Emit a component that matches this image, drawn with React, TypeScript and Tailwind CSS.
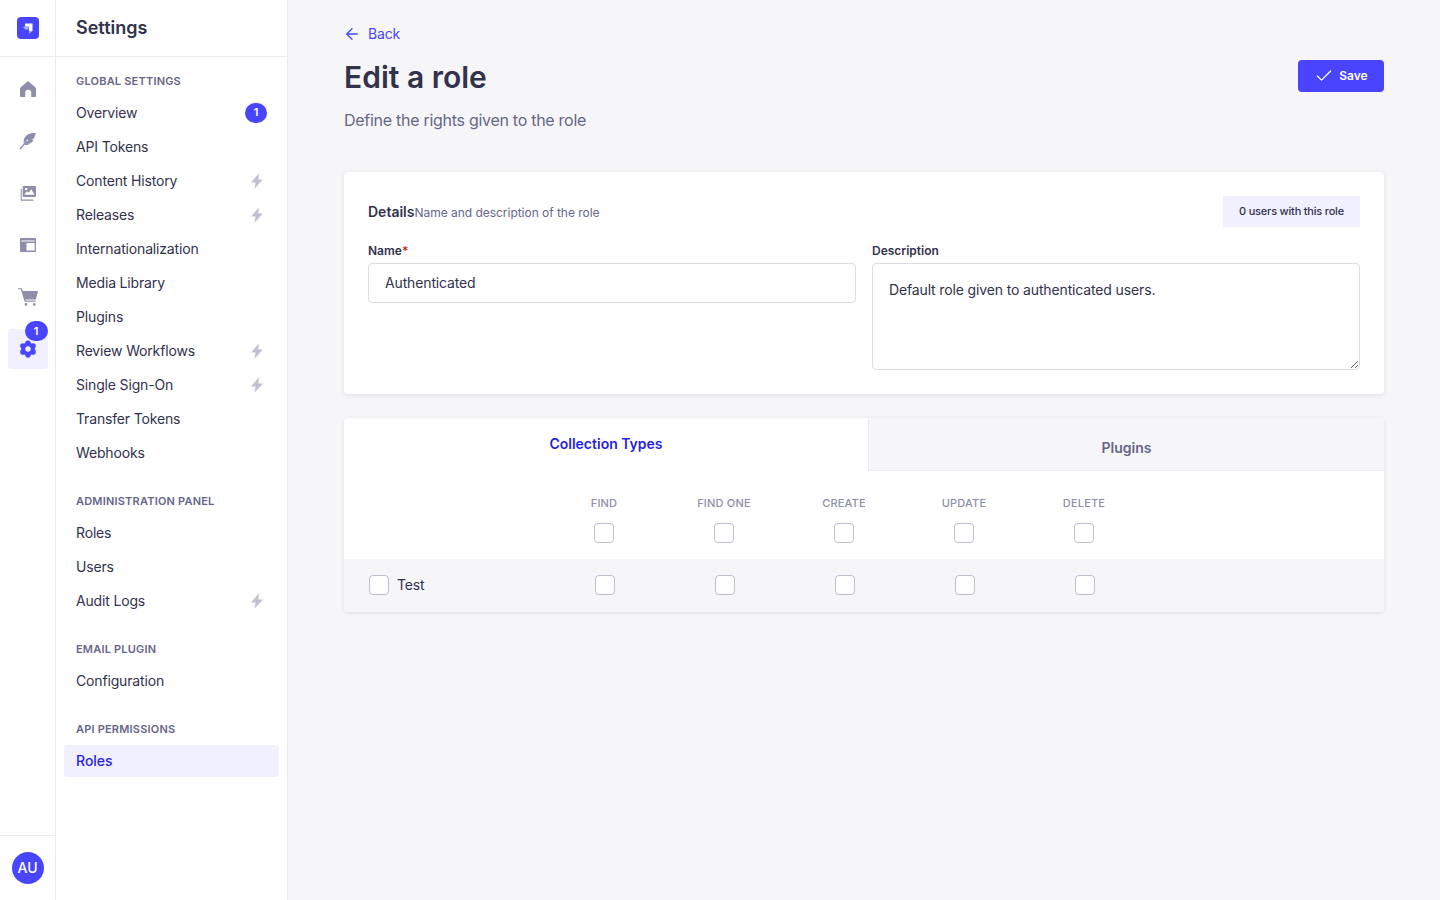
import { ArrowLeft, Check } from 'lucide-react';

const sections = [
  {
    title: 'Global Settings',
    items: [
      { label: 'Overview', badge: true },
      { label: 'API Tokens' },
      { label: 'Content History', bolt: true },
      { label: 'Releases', bolt: true },
      { label: 'Internationalization' },
      { label: 'Media Library' },
      { label: 'Plugins' },
      { label: 'Review Workflows', bolt: true },
      { label: 'Single Sign-On', bolt: true },
      { label: 'Transfer Tokens' },
      { label: 'Webhooks' },
    ],
  },
  {
    title: 'Administration Panel',
    items: [{ label: 'Roles' }, { label: 'Users' }, { label: 'Audit Logs', bolt: true }],
  },
  { title: 'Email Plugin', items: [{ label: 'Configuration' }] },
  { title: 'API Permissions', items: [{ label: 'Roles', active: true }] },
];

const actions = ['Find', 'Find one', 'Create', 'Update', 'Delete'];

function Bolt() {
  return (
    <svg width="12" height="16" viewBox="0 0 12 16" className="mr-1 fill-[#c0c0cf]">
      <path d="M8.200.2 0 9.400h4.600L3.400 15.800 12 6.400H7.200z" />
    </svg>
  );
}

function Logo() {
  return (
    <svg width="22" height="22" viewBox="0 0 22 22">
      <rect width="22" height="22" rx="4" fill="#4945ff" />
      <path d="M8 6.500h7.500V14H12v-3.900a.6.6 0 0 0-.6-.6H8z" fill="#fff" />
      <path d="M8 9.500h3.600V12.600H8.600a.6.6 0 0 1-.4-.2L6 10.200z" fill="#fff" opacity=".55" />
      <path d="M12 14h3.500l-3.100 2.400a.3.3 0 0 1-.4-.2z" fill="#fff" opacity=".55" />
    </svg>
  );
}

function HomeIcon() {
  return (
    <svg width="16" height="16" viewBox="0 0 16 16" className="fill-[#8e8ea9]">
      <path d="M7.200.7a1.200 1.200 0 0 1 1.600 0l6.800 5.900c.3.2.4.5.4.9V15a1 1 0 0 1-1 1h-3.800v-4.200a3 3 0 0 0-6 0V16H1a1 1 0 0 1-1-1V7.500c0-.4.1-.7.4-.9z" />
    </svg>
  );
}

function FeatherIcon() {
  return (
    <svg width="18" height="18" viewBox="0 0 18 18" className="fill-[#8e8ea9]">
      <path d="M16.800 1.200c-3.800-.8-8 .4-10.300 3.300-1.600 2-2 4.600-1.800 7.200l3.600-4.200 1 .8-3.800 4.400c2.200.4 4.500.2 6-1.100l-2.300-.3 3.500-.9c.8-.8 1.300-1.700 1.700-2.700l-2.200-.1 2.800-1c.7-1.900 1.300-3.800 1.800-5.400z" />
      <path d="M1 17 8 9" stroke="#8e8ea9" strokeWidth="1.300" fill="none" />
    </svg>
  );
}

function ImagesIcon() {
  return (
    <svg width="16" height="15" viewBox="0 0 16 15" className="fill-[#8e8ea9]">
      <path d="M3.500 0h11.700c.5 0 .8.3.8.8v9.400c0 .5-.3.8-.8.8H3.500c-.5 0-.8-.3-.8-.8V.8c0-.5.3-.8.8-.8z" />
      <path d="M4.200 8.800 6.900 5.300l1.700 1.500 2.700-3.600 3.200 5.600z" fill="#fff" />
      <circle cx="6.200" cy="3" r="1.200" fill="#fff" />
      <path d="M.7 2.800h1v10.400c0 .2.1.3.3.3h11.500v1.200H1.500c-.5 0-.8-.3-.8-.8z" />
    </svg>
  );
}

function LayoutIcon() {
  return (
    <svg width="16" height="14" viewBox="0 0 16 14" className="fill-[#8e8ea9]">
      <path
        fillRule="evenodd"
        d="M.8 0h14.400c.5 0 .8.3.8.8v12.400c0 .5-.3.8-.8.8H.8c-.5 0-.8-.3-.8-.8V.8C0 .3.3 0 .8 0zm.5 2.600v.8h13.400v-.8zM6.500 5v7.600h8.200V5z"
      />
    </svg>
  );
}

function CartIcon() {
  return (
    <svg width="20" height="18" viewBox="0 0 20 18" className="fill-[#8e8ea9]">
      <path d="M0 .2h3.300c.3 0 .5.2.6.4L4.800 3h14.600c.4 0 .6.3.5.7l-2 7.500c-.1.3-.3.4-.6.4H7.400l.4 1h9.700v1.100H7.100c-.3 0-.5-.1-.6-.4L2.800 1.300H0z" />
      <circle cx="8" cy="16.400" r="1.300" />
      <circle cx="16.200" cy="16.400" r="1.300" />
    </svg>
  );
}

function GearIcon() {
  return (
    <svg width="18" height="18" viewBox="0 0 18 18" className="fill-[#4945ff]">
      <circle cx="9" cy="9" r="6.500" />
      <circle cx="9" cy="3.200" r="2.800" />
      <circle cx="9" cy="14.800" r="2.800" />
      <circle cx="4" cy="6.100" r="2.800" />
      <circle cx="14" cy="6.100" r="2.800" />
      <circle cx="4" cy="11.900" r="2.800" />
      <circle cx="14" cy="11.900" r="2.800" />
      <circle cx="9" cy="9" r="2.700" fill="#f0f0ff" />
    </svg>
  );
}

function RailIcon({ children, active, badge }: { children: React.ReactNode; active?: boolean; badge?: boolean }) {
  return (
    <div className={`relative flex h-10 w-10 items-center justify-center rounded ${active ? 'bg-[#f0f0ff]' : ''}`}>
      {children}
      {badge && (
        <span className="absolute -top-2 right-0 flex h-5 w-[23px] items-center justify-center rounded-full bg-[#4945ff] text-[11px] font-semibold text-white">
          1
        </span>
      )}
    </div>
  );
}

function Box() {
  return <span className="block h-5 w-5 rounded border border-[#c0c0cf] bg-white" />;
}

export default function App() {
  return (
    <div className="flex h-[900px] overflow-hidden bg-[#f6f6f9] font-['Inter',sans-serif] text-[#32324d]">
      <nav className="flex w-14 shrink-0 flex-col border-r border-[#eaeaef] bg-white">
        <div className="flex h-[57px] shrink-0 items-center justify-center border-b border-[#eaeaef]">
          <Logo />
        </div>
        <div className="flex flex-1 flex-col items-center gap-3 pt-3">
          <RailIcon>
            <HomeIcon />
          </RailIcon>
          <RailIcon>
            <FeatherIcon />
          </RailIcon>
          <RailIcon>
            <ImagesIcon />
          </RailIcon>
          <RailIcon>
            <LayoutIcon />
          </RailIcon>
          <RailIcon>
            <CartIcon />
          </RailIcon>
          <RailIcon active badge>
            <GearIcon />
          </RailIcon>
        </div>
        <div className="flex h-[65px] shrink-0 items-center justify-center border-t border-[#eaeaef]">
          <span className="flex h-8 w-8 items-center justify-center rounded-full bg-[#4945ff] text-sm font-medium text-white">
            AU
          </span>
        </div>
      </nav>

      <aside className="w-[232px] shrink-0 border-r border-[#eaeaef] bg-white">
        <div className="flex h-[57px] items-center border-b border-[#eaeaef] pl-5">
          <h2 className="text-lg font-semibold">Settings</h2>
        </div>
        <div className="flex flex-col gap-6 px-2 pt-4">
          {sections.map((section) => (
            <div key={section.title}>
              <div className="mb-2 h-4 pl-3 text-[11px] leading-4 font-semibold tracking-[0.2px] text-[#666687] uppercase">
                {section.title}
              </div>
              <ul className="flex flex-col gap-0.5">
                {section.items.map((item) => (
                  <li
                    key={item.label}
                    className={`flex h-8 items-center justify-between rounded-sm px-3 text-sm ${
                      item.active ? 'bg-[#f0f0ff] font-medium text-[#271fe0]' : 'tracking-[-0.16px]'
                    }`}
                  >
                    {item.label}
                    {item.bolt && <Bolt />}
                    {item.badge && (
                      <span className="flex h-5 w-[22px] items-center justify-center rounded-full bg-[#4945ff] text-[11px] font-semibold text-white">
                        1
                      </span>
                    )}
                  </li>
                ))}
              </ul>
            </div>
          ))}
        </div>
      </aside>

      <main className="flex-1 px-14 pt-6">
        <a className="flex h-5 items-center gap-1.5 text-sm tracking-[-0.14px] text-[#4945ff]">
          <ArrowLeft size={18} strokeWidth={1.75} className="-ml-px mr-px" />
          Back
        </a>
        <div className="mt-2 flex items-start justify-between">
          <h1 className="mt-[5px] text-[30px] leading-10 font-semibold">Edit a role</h1>
          <button className="mt-2 flex h-8 w-[86px] items-center justify-center gap-[5px] rounded bg-[#4945ff] text-xs font-semibold text-white">
            <Check size={20} strokeWidth={1.5} />
            Save
          </button>
        </div>
        <p className="mt-[11px] leading-6 tracking-[-0.28px] text-[#666687]">Define the rights given to the role</p>

        <section className="mt-10 h-[222px] rounded bg-white p-6 shadow-[0_1px_4px_rgba(33,33,52,0.1)]">
          <div className="flex items-center justify-between">
            <div className="flex items-baseline">
              <span className="text-sm font-semibold">Details</span>
              <span className="text-xs tracking-[-0.03px] text-[#666687]">Name and description of the role</span>
            </div>
            <span className="flex h-[31px] w-[137px] items-center justify-center bg-[#f0f0ff] text-[11px] font-medium tracking-[-0.2px]">
              0 users with this role
            </span>
          </div>
          <div className="mt-4 grid grid-cols-2 gap-4">
            <div>
              <label className="block h-5 text-xs leading-4 font-semibold">
                Name<span className="text-[#d02b20]">*</span>
              </label>
              <div className="flex h-10 items-center rounded border border-[#dcdce4] px-4 text-sm tracking-[-0.14px]">
                Authenticated
              </div>
            </div>
            <div>
              <label className="block h-5 text-xs leading-4 font-semibold">Description</label>
              <textarea
                readOnly
                defaultValue="Default role given to authenticated users."
                className="block h-[107px] w-full rounded border border-[#dcdce4] px-4 py-4 text-sm leading-[20px] tracking-[-0.14px] outline-none"
              />
            </div>
          </div>
        </section>

        <section className="mt-6 rounded bg-white shadow-[0_1px_4px_rgba(33,33,52,0.1)]">
          <div className="flex h-[53px]">
            <div className="flex h-[53px] w-[524px] items-start justify-center rounded-t bg-white pt-[17px] text-sm leading-[18px] font-semibold text-[#271fe0]">
              Collection Types
            </div>
            <div className="flex flex-1 items-center justify-center border-b border-l border-[#eaeaef] bg-[#f6f6f9] pt-[7px] text-sm font-semibold text-[#666687]">
              Plugins
            </div>
          </div>
          <div className="flex h-[88px] pt-6 pl-[200px]">
            {actions.map((a) => (
              <div key={a} className="flex w-[120px] flex-col items-center gap-3">
                <span className="text-[11px] leading-4 font-medium tracking-[0.2px] text-[#8e8ea9] uppercase">{a}</span>
                <Box />
              </div>
            ))}
          </div>
          <div className="flex h-[53px] items-start rounded-b bg-[#f6f6f9] pt-4">
            <div className="flex w-[201px] items-center gap-2 pl-[25px] text-sm tracking-[-0.14px]">
              <Box />
              Test
            </div>
            {actions.map((a) => (
              <div key={a} className="flex w-[120px] justify-center">
                <Box />
              </div>
            ))}
          </div>
        </section>
      </main>
    </div>
  );
}
